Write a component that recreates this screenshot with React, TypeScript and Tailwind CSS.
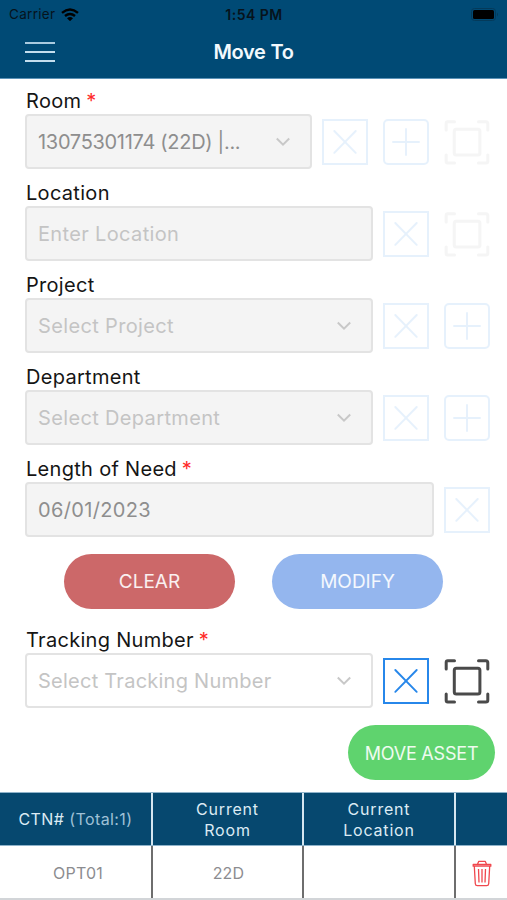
import React from "react";
import clsx from "clsx";

type IconKind = "clear" | "add" | "scan";

const ClearIcon = ({ className }: { className?: string }) => (
    <svg viewBox="0 0 46 46" fill="none" className={clsx("size-[46px] shrink-0", className)} stroke="#2787ea">
        <rect x="1" y="1" width="44" height="44" strokeWidth="2" />
        <path d="M12.3 12 33.7 33.8M33.7 12 12.3 33.8" strokeWidth="1.9" strokeLinecap="round" />
    </svg>
);

const AddIcon = ({ className }: { className?: string }) => (
    <svg viewBox="0 0 46 46" fill="none" className={clsx("size-[46px] shrink-0", className)} stroke="#2787ea">
        <rect x="1" y="1" width="44" height="44" rx="4" strokeWidth="2" />
        <path d="M23 10V36M10 23H36" strokeWidth="1.9" strokeLinecap="round" />
    </svg>
);

const ScanIcon = ({ className }: { className?: string }) => (
    <svg
        viewBox="0 0 46 46"
        fill="none"
        className={clsx("size-[46px] shrink-0", className)}
        stroke="#4a4a4a"
        strokeWidth="3"
        strokeLinejoin="round"
    >
        <path
            d="M2.2 11V4.2Q2.2 2.7 3.7 2.7H10.5M34.5 2.7H41.8Q43.8 2.7 43.8 4.7V11M43.8 36V42.3Q43.8 44 41.8 44H34.5M10.5 44H3.7Q2.2 44 2.2 42.5V36"
            strokeLinecap="round"
        />
        <rect x="10.3" y="10.3" width="25.6" height="25.6" rx="2" />
    </svg>
);

const icons = { clear: ClearIcon, add: AddIcon, scan: ScanIcon };

const Chevron = () => (
    <svg viewBox="0 0 16 10" fill="none" className="mr-[19px] h-[10px] w-4 shrink-0">
        <path d="M1.8 1.5 8 7.7 14.2 1.5" stroke="#c8c8c8" strokeWidth="2" />
    </svg>
);

interface FieldProps {
    label: string;
    text: string;
    actions: IconKind[];
    required?: boolean;
    filled?: boolean;
    select?: boolean;
    enabled?: boolean;
    className?: string;
    textClassName?: string;
}

function Field({ label, text, actions, required, filled, select, enabled, className, textClassName }: FieldProps) {
    return (
        <div className={clsx("pr-[17px] pl-[25px]", className)}>
            <div className="h-7 pt-px pl-px text-[20px] leading-[29px] tracking-[0.3px] text-[#151515]">
                {label}
                {required && <span className="-ml-px text-[#ff2a2a]"> *</span>}
            </div>
            <div className="flex items-center">
                <div
                    className={clsx(
                        "flex h-[55px] min-w-0 flex-1 items-center justify-between rounded-[4px] border-2 border-[#e3e3e3] pl-[11px]",
                        enabled ? "bg-white" : "bg-[#f4f4f4]"
                    )}
                >
                    <span
                        className={clsx(
                            "text-[20px] whitespace-nowrap",
                            filled ? "text-[#8e8e8e]" : "text-[#c4c4c4]",
                            textClassName ?? "tracking-[0.35px]"
                        )}
                    >
                        {text}
                    </span>
                    {select && <Chevron />}
                </div>
                <div className="ml-[10px] flex gap-[15px]">
                    {actions.map((kind) => {
                        const Icon = icons[kind];
                        const faded = kind === "scan" ? "opacity-[0.05]" : "opacity-[0.11]";
                        return <Icon key={kind} className={enabled ? undefined : faded} />;
                    })}
                </div>
            </div>
        </div>
    );
}

function Header() {
    return (
        <header className="h-[79px] border-b border-[#5c93b8] bg-[#004a75]">
            <div className="grid h-7 grid-cols-3 items-center pr-[8px] pl-[9px] text-[13.5px] text-[#06131c]">
                <div className="flex items-center gap-[6px]">
                    <span className="tracking-[0.3px]">Carrier</span>
                    <svg viewBox="0 0 18 13" className="h-[13px] w-[18px]" fill="none" stroke="#000" strokeWidth="2.4">
                        <path d="M1 4.8Q9-2 17 4.8M4 8Q9 3.8 14 8" />
                        <path d="M6 10.2Q9 7.6 12 10.2L9 13.2Z" fill="#000" stroke="none" />
                    </svg>
                </div>
                <div className="text-center text-[14px] font-semibold tracking-[0.5px] whitespace-nowrap">1:54 PM</div>
                <svg viewBox="0 0 28 13" className="h-[13px] w-7 justify-self-end">
                    <rect x="0.5" y="0.5" width="24" height="12" rx="3" fill="none" stroke="#043a5a" />
                    <rect x="2" y="2" width="21" height="9" rx="1.5" fill="#000" />
                    <path d="M26 4.5Q28 6.5 26 8.5Z" fill="#043a5a" />
                </svg>
            </div>
            <div className="grid h-12 grid-cols-3 items-center">
                <button className="ml-[25px] flex w-[30px] flex-col gap-[7px]" aria-label="Menu">
                    <span className="h-[2px] bg-[#a9cbe0]" />
                    <span className="h-[2px] bg-[#c4deee]" />
                    <span className="h-[2px] bg-[#c4deee]" />
                </button>
                <h1 className="text-center text-[20px] font-semibold tracking-[-0.3px] text-[#f2f9fd]">Move To</h1>
            </div>
        </header>
    );
}

function AssetTable() {
    const head = "flex items-center justify-center border-[#d5e6f0] pt-px text-center text-[16px] leading-[21px]";
    const cell = "flex items-center justify-center border-[#6e6e6e] pt-[2px] text-[16px] tracking-[0.2px]";
    return (
        <div>
            <div className="grid h-[54px] grid-cols-[153px_151px_152px_1fr] border-y border-[#8fb3ca] bg-[#06486f] text-[#dcebf4]">
                <div className={clsx(head, "border-r-2 tracking-[0.4px]")}>
                    <span>
                        CTN# <span className="text-[#9fc0d6]">(Total:1)</span>
                    </span>
                </div>
                <div className={clsx(head, "border-r-2 tracking-[0.8px]")}>
                    Current
                    <br />
                    Room
                </div>
                <div className={clsx(head, "border-r-2 tracking-[0.8px]")}>
                    Current
                    <br />
                    Location
                </div>
                <div />
            </div>
            <div className="grid h-[54px] grid-cols-[153px_151px_152px_1fr] border-b-2 border-[#d2d5d8] text-[#8c8c90]">
                <div className={clsx(cell, "border-r-2 pl-[5px]")}>OPT01</div>
                <div className={clsx(cell, "border-r-2 pl-[2px]")}>22D</div>
                <div className={clsx(cell, "border-r-2")} />
                <div className="flex items-center justify-center pt-[2px]">
                    <svg viewBox="0 0 20 27" fill="none" className="h-[27px] w-5" stroke="#f0474d" strokeWidth="1.3">
                        <path d="M1.2 4.5H18.8V6.2H1.2ZM5.5 4.3 6.8 1.3H13.2L14.5 4.3" strokeLinejoin="round" />
                        <path d="M2.3 6 3.3 23.7Q3.5 25.7 5.3 25.7H14.7Q16.5 25.7 16.7 23.7L17.7 6M6.5 9 7 22.5M10 9V22.5M13.5 9 13 22.5" />
                    </svg>
                </div>
            </div>
        </div>
    );
}

export default function App() {
    const pill = "flex h-[55px] items-center justify-center rounded-full pt-[2px] text-white/90";
    return (
        <div className="h-[900px] w-[507px] overflow-hidden bg-white font-['Inter','Liberation_Sans',sans-serif]">
            <Header />
            <Field
                label="Room"
                text="13075301174 (22D) |..."
                actions={["clear", "add", "scan"]}
                required
                filled
                select
                className="pt-[7px]"
                textClassName="tracking-[-0.3px]"
            />
            <Field label="Location" text="Enter Location" actions={["clear", "scan"]} className="pt-[9px]" />
            <Field label="Project" text="Select Project" actions={["clear", "add"]} select className="pt-[9px]" />
            <Field label="Department" text="Select Department" actions={["clear", "add"]} select className="pt-[9px]" />
            <Field label="Length of Need" text="06/01/2023" actions={["clear"]} required filled className="pt-[9px]" />
            <div className="flex justify-center gap-[37px] pt-[17px]">
                <button className={clsx(pill, "w-[171px] bg-[#cc6869] text-[19px]")}>CLEAR</button>
                <button className={clsx(pill, "w-[171px] bg-[#94b6ee] text-[19px]")}>MODIFY</button>
            </div>
            <Field
                label="Tracking Number"
                text="Select Tracking Number"
                actions={["clear", "scan"]}
                required
                select
                enabled
                className="pt-4"
                textClassName="tracking-[0.25px]"
            />
            <div className="flex justify-end pt-[17px] pr-3 pb-3">
                <button className={clsx(pill, "w-[147px] bg-[#5fd36e] text-[18px] tracking-[-0.2px]")}>MOVE ASSET</button>
            </div>
            <AssetTable />
        </div>
    );
}
